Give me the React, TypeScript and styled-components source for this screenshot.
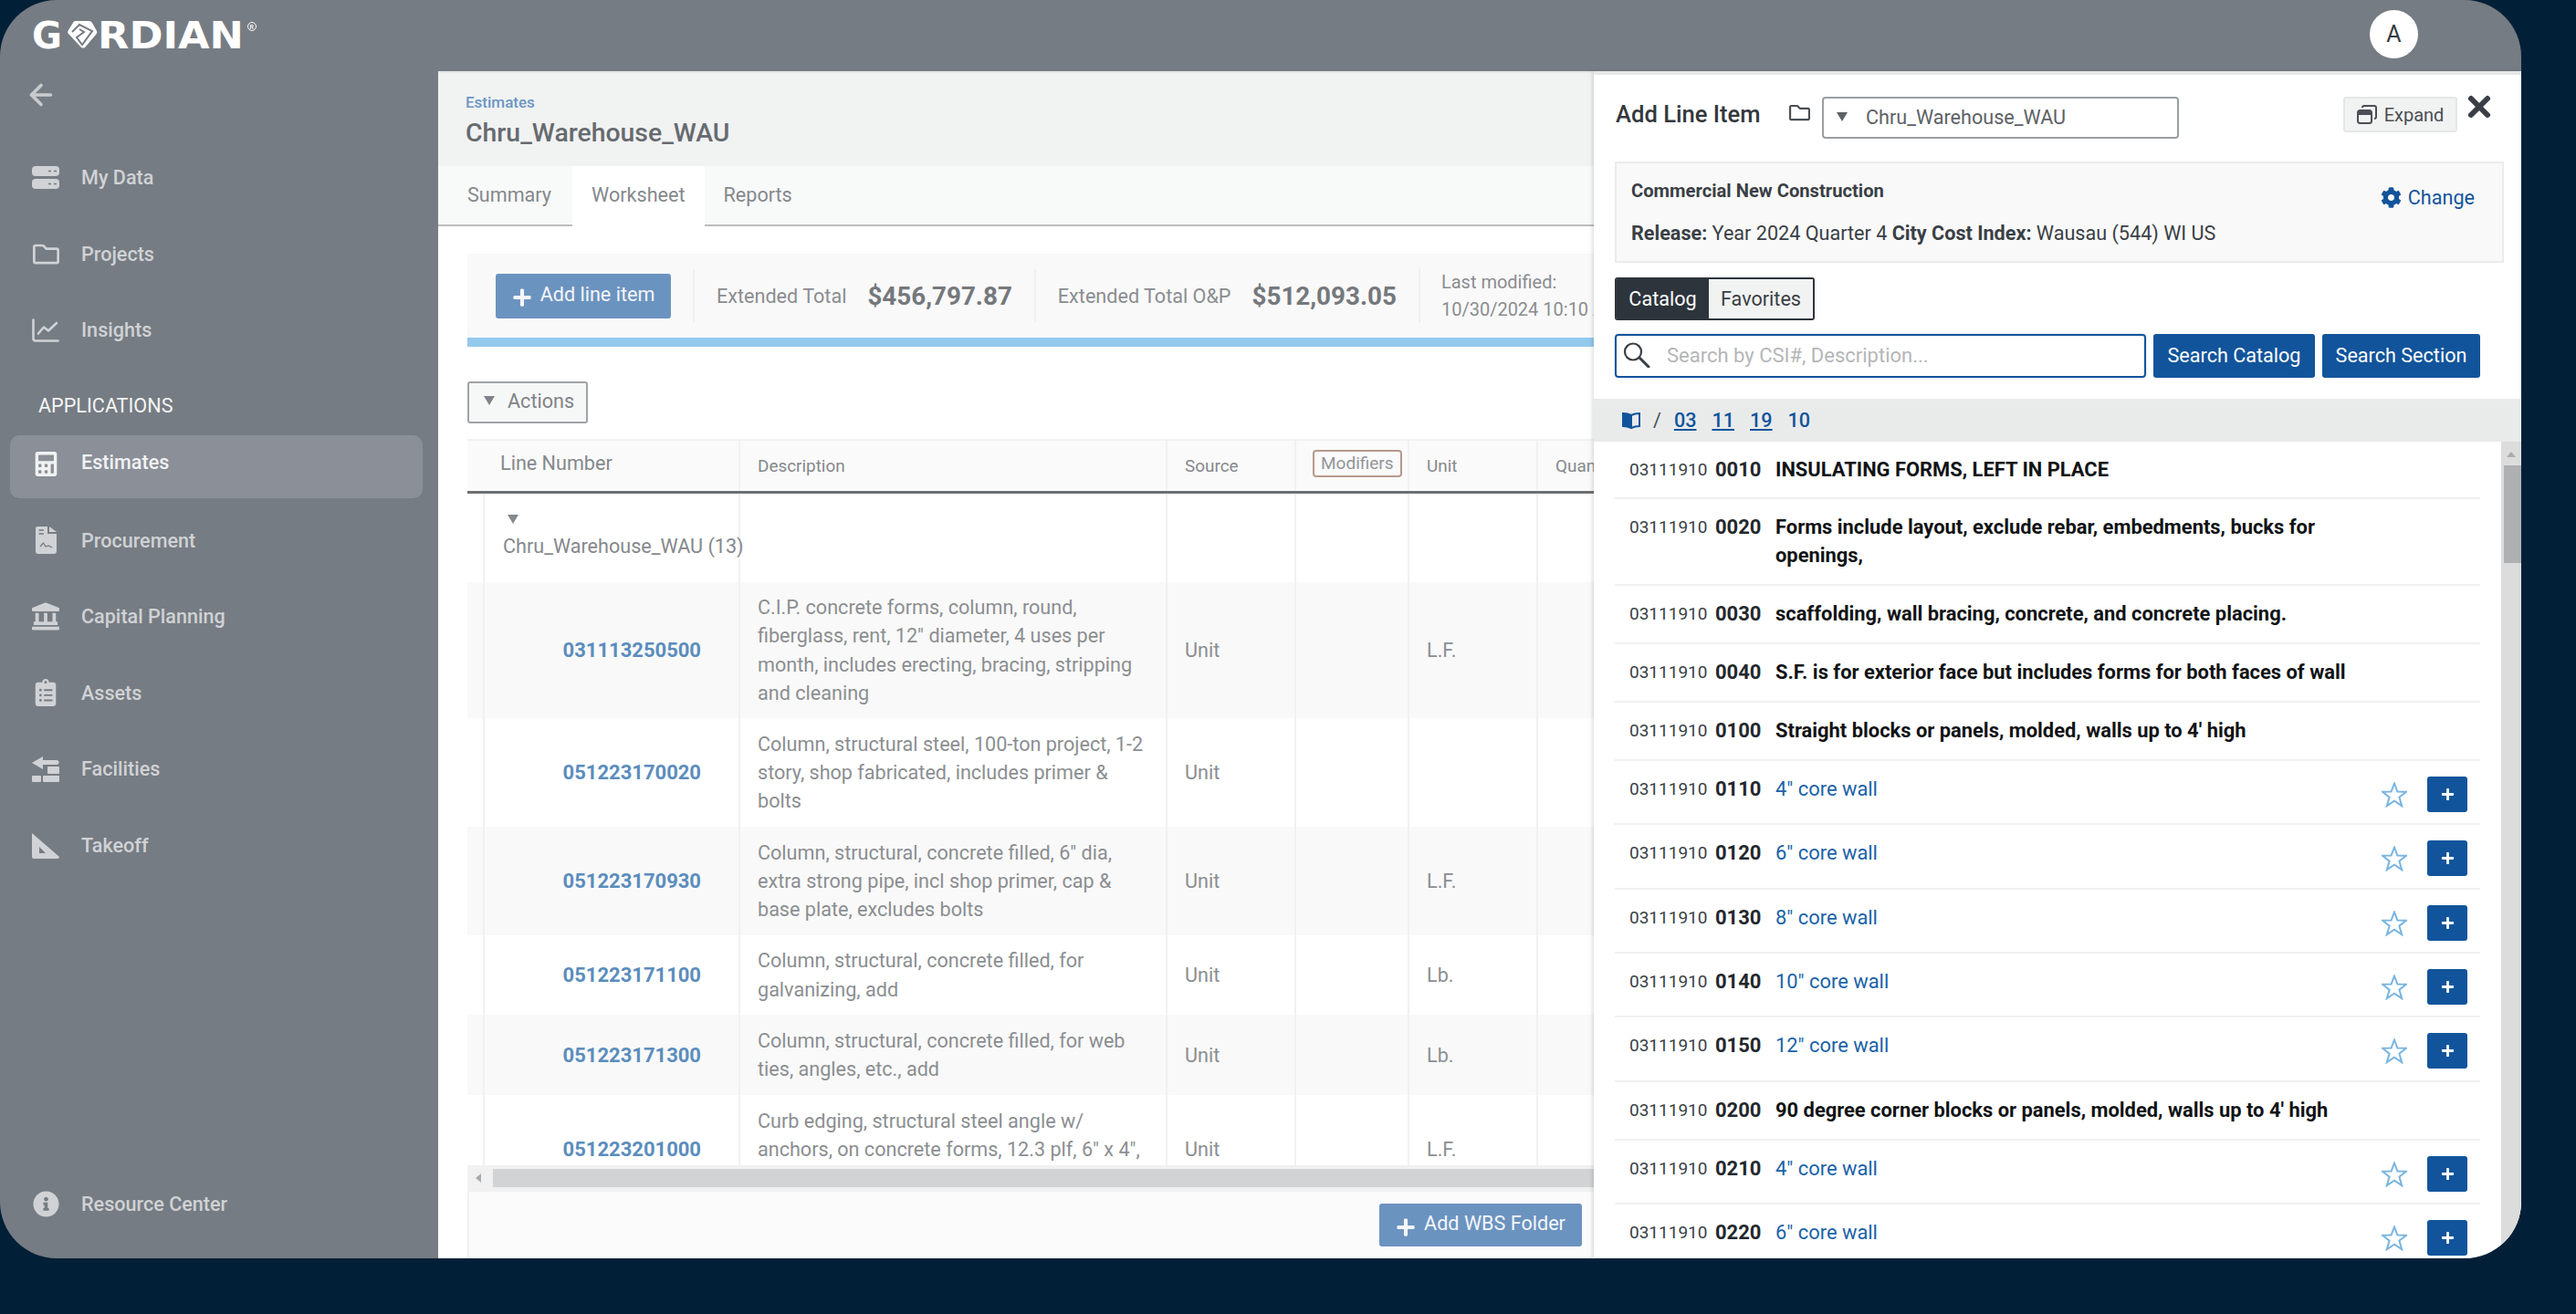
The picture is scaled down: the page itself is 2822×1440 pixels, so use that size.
import React from "react";
import styled, { createGlobalStyle } from "styled-components";
import {
  FaRegFolder,
  FaCalculator,
  FaLandmark,
  FaClipboardList,
  FaInfoCircle,
  FaCog,
  FaPlus,
} from "react-icons/fa";
import { ArrowLeft, X } from "lucide-react";

const GlobalStyle = createGlobalStyle`
  html, body { margin: 0; padding: 0; background: #012037; }
  body { font-family: Roboto, "Liberation Sans", sans-serif; }
  * { box-sizing: border-box; }
`;

const COLS = "299px 468px 141px 124px 141px 200px";

const Page = styled.div`
  width: 2822px;
  height: 1440px;
  background: #012037;
  overflow: hidden;
`;

const Frame = styled.div`
  width: 2762px;
  height: 1379px;
  border-radius: 62px;
  background: #767c83;
  overflow: hidden;
  display: flex;
  flex-direction: column;
`;

const TopBar = styled.header`
  height: 78px;
  flex: none;
  display: flex;
  align-items: flex-start;
  justify-content: space-between;
  padding: 11px 113px 0 35px;
`;

const LogoWrap = styled.div`
  margin-top: 12px;
  display: flex;
  align-items: flex-start;
`;

const Avatar = styled.div`
  width: 53px;
  height: 53px;
  border-radius: 50%;
  background: #ffffff;
  color: #333a41;
  font-size: 25px;
  display: flex;
  align-items: center;
  justify-content: center;
`;

const Body = styled.div`
  flex: 1;
  min-height: 0;
  display: flex;
`;

const Sidebar = styled.nav`
  width: 480px;
  flex: none;
  display: flex;
  flex-direction: column;
  padding: 0 17px 0 11px;
`;

const BackRow = styled.div`
  height: 52px;
  padding-left: 16px;
  color: #c9cbce;
  display: flex;
  align-items: center;
  margin-bottom: 23px;
`;

const NavItem = styled.div<{ $active?: boolean }>`
  height: ${(p) => (p.$active ? "69px" : "83.5px")};
  margin-bottom: ${(p) => (p.$active ? "5px" : "0")};
  display: flex;
  align-items: ${(p) => (p.$active ? "flex-start" : "center")};
  padding-top: ${(p) => (p.$active ? "17px" : "0")};
  padding-left: 24px;
  gap: 24px;
  border-radius: 10px;
  font-size: 21.6px;
  font-weight: 500;
  color: ${(p) => (p.$active ? "#f1f2f3" : "#d0d2d5")};
  background: ${(p) => (p.$active ? "#8a8f98" : "transparent")};
`;

const NavIcon = styled.span`
  width: 30px;
  height: 30px;
  flex: none;
  display: flex;
  align-items: center;
  justify-content: center;
  font-size: 29px;
`;

const NavHeading = styled.div`
  height: 33px;
  padding-left: 31px;
  margin-top: 24px;
  margin-bottom: 16px;
  font-size: 21.6px;
  color: #f4f5f6;
  display: flex;
  align-items: center;
`;

const SideSpacer = styled.div`
  flex: 1;
`;

const BottomItem = styled(NavItem)`
  margin-bottom: 18px;
`;

const Main = styled.main`
  width: 1266px;
  flex: none;
  background: #ffffff;
  border-top: 2px solid #e6e7e8;
  display: flex;
  flex-direction: column;
  overflow: hidden;
`;

const PageHead = styled.div`
  height: 102px;
  flex: none;
  background: #f1f2f2;
  padding: 22px 30px 0;
`;

const Crumb = styled.div`
  font-size: 17px;
  font-weight: 500;
  color: #6b96c4;
  line-height: 20px;
`;

const PageTitle = styled.h1`
  margin: 6px 0 0;
  font-size: 28.4px;
  font-weight: 500;
  line-height: 36px;
  color: #666a6f;
`;

const Tabs = styled.div`
  height: 66px;
  flex: none;
  background: #f8f9f9;
  border-bottom: 2px solid #bcbdbe;
  display: flex;
  padding-left: 32px;
`;

const Tab = styled.div<{ $active?: boolean }>`
  height: 66px;
  padding: 0 21px 3px;
  display: flex;
  align-items: center;
  font-size: 21.6px;
  color: #85888c;
  background: ${(p) => (p.$active ? "#ffffff" : "transparent")};
  &:first-child {
    padding: 0 23px 3px 0;
  }
`;

const Content = styled.div`
  flex: 1;
  min-height: 0;
  padding: 30px 0 0 32px;
  display: flex;
  flex-direction: column;
`;

const Totals = styled.div`
  height: 92px;
  flex: none;
  background: #f9f9f9;
  display: flex;
  align-items: center;
  padding-left: 31px;
  white-space: nowrap;
`;

const PrimaryButton = styled.div`
  display: inline-flex;
  align-items: center;
  justify-content: center;
  gap: 9px;
  background: #6b93bf;
  color: #f4f6f9;
  border-radius: 3px;
  font-size: 21.6px;
  padding-bottom: 4px;
  svg {
    margin-top: 8px;
  }
`;

const AddItemButton = styled(PrimaryButton)`
  width: 192px;
  height: 49px;
  flex: none;
`;

const TotalGroup = styled.div`
  height: 58px;
  border-left: 2px solid #f0f0f0;
  display: flex;
  align-items: center;
  padding: 0 24px;
  gap: 23px;
  margin-left: 24px;
  & + & {
    margin-left: 0;
  }
`;

const TotalLabel = styled.span`
  font-size: 21.6px;
  color: #8a8d90;
`;

const TotalValue = styled.span`
  font-size: 27.8px;
  font-weight: 700;
  color: #75787c;
`;

const Modified = styled.div`
  border-left: 2px solid #f0f0f0;
  padding-left: 23px;
  font-size: 20px;
  line-height: 30px;
  color: #8a8d90;
`;

const ProgressLine = styled.div`
  height: 10px;
  flex: none;
  background: #93c9ec;
`;

const ActionsButton = styled.div`
  width: 132px;
  height: 46px;
  flex: none;
  margin-top: 38px;
  border: 2px solid #a0a3a6;
  border-radius: 3px;
  background: #f6f7f7;
  display: flex;
  align-items: center;
  gap: 14px;
  padding: 0 0 4px 16px;
  font-size: 21.6px;
  color: #808387;
`;

const Caret = styled.span`
  width: 0;
  height: 0;
  flex: none;
  border-left: 6px solid transparent;
  border-right: 6px solid transparent;
  border-top: 10px solid currentColor;
`;

const TableWrap = styled.div`
  margin-top: 17px;
  flex: 1;
  min-height: 0;
  display: flex;
  flex-direction: column;
  overflow: hidden;
`;

const HeadRow = styled.div`
  height: 60px;
  flex: none;
  display: grid;
  grid-template-columns: ${COLS};
  background: #fafafa;
  border-bottom: 3px solid #6d7073;
  border-top: 2px solid #f1f1f1;
`;

const HeadCell = styled.div<{ $large?: boolean }>`
  display: flex;
  align-items: center;
  padding-left: ${(p) => (p.$large ? "36px" : "19px")};
  font-size: ${(p) => (p.$large ? "21.6px" : "18.9px")};
  padding-bottom: ${(p) => (p.$large ? "6px" : "0")};
  color: #85888c;
  border-right: 2px solid #f1f1f1;
  white-space: nowrap;
`;

const ModifierTag = styled.span`
  border: 2px solid #b59a8c;
  border-radius: 4px;
  height: 30px;
  padding: 0 7px;
  margin-left: -1px;
  margin-bottom: 6px;
  display: flex;
  align-items: center;
  font-size: 19px;
  color: #92959a;
`;

const TableBody = styled.div`
  flex: 1;
  min-height: 0;
  overflow: hidden;
`;

const GroupRow = styled.div`
  height: 97px;
  display: grid;
  grid-template-columns: ${COLS};
`;

const GroupCell = styled.div`
  border-right: 2px solid #f1f1f1;
`;

const GroupName = styled.div`
  margin-left: 17px;
  height: 100%;
  border-left: 2px solid #f1f1f1;
  padding: 15px 0 0 20px;
  font-size: 21.6px;
  color: #85888c;
  white-space: nowrap;
  position: relative;
  z-index: 1;
`;

const GroupCaret = styled(Caret)`
  display: block;
  margin: 8px 0 12px 5px;
`;

const DataRow = styled.div<{ $h: number; $odd: boolean }>`
  height: ${(p) => p.$h}px;
  display: grid;
  grid-template-columns: ${COLS};
  background: ${(p) => (p.$odd ? "#f9f9f9" : "#ffffff")};
`;

const Cell = styled.div`
  border-right: 2px solid #f1f1f1;
  padding-left: 19px;
  display: flex;
  align-items: center;
  font-size: 21.6px;
  color: #8b8e91;
`;

const LineNoCell = styled(Cell)`
  padding-left: 0;
  justify-content: flex-end;
  padding-right: 41px;
  font-size: 22px;
  font-weight: 700;
  color: #5b8dbd;
  position: relative;
  &::before {
    content: "";
    position: absolute;
    left: 17px;
    top: 0;
    bottom: 0;
    border-left: 2px solid #f1f1f1;
  }
`;

const DescCell = styled(Cell)`
  line-height: 31.3px;
  padding-right: 14px;
`;

const ClippedRow = styled.div`
  overflow: hidden;
`;

const HScroll = styled.div`
  height: 27px;
  flex: none;
  background: #f1f1f1;
  display: flex;
  align-items: center;
  padding: 0 0 0 28px;
  position: relative;
`;

const HThumb = styled.div`
  flex: 1;
  height: 20px;
  background: #d2d3d4;
`;

const ScrollArrowLeft = styled.span`
  position: absolute;
  left: 9px;
  top: 9px;
  border-top: 5px solid transparent;
  border-bottom: 5px solid transparent;
  border-right: 6px solid #a9abad;
`;

const TableFoot = styled.div`
  height: 75px;
  flex: none;
  background: #fbfbfb;
  border-top: 2px solid #f1f1f1;
  border-left: 2px solid #f1f1f1;
  display: flex;
  justify-content: flex-end;
  padding: 13px 13px 0 0;
  width: 1234px;
`;

const AddWbsButton = styled(PrimaryButton)`
  width: 222px;
  height: 47px;
`;

const Drawer = styled.aside`
  flex: 1;
  min-width: 0;
  background: #ffffff;
  border-top: 4px solid #e6e7e8;
  display: flex;
  flex-direction: column;
  box-shadow: -2px 0 4px rgba(0, 0, 0, 0.12);
  position: relative;
  z-index: 2;
`;

const DrawerHead = styled.div`
  height: 95px;
  flex: none;
  display: flex;
  align-items: flex-start;
  padding: 24px 0 0 24px;
`;

const DrawerTitle = styled.div`
  font-size: 25.6px;
  font-weight: 500;
  color: #33383d;
  line-height: 38px;
  width: 158px;
  flex: none;
  white-space: nowrap;
`;

const FolderIcon = styled.span`
  margin: 6px 13px 0 32px;
  font-size: 23px;
  color: #4a4f55;
  display: flex;
`;

const SelectBox = styled.div`
  width: 391px;
  height: 46px;
  flex: none;
  border: 2px solid #9b9ea1;
  border-radius: 4px;
  display: flex;
  align-items: center;
  gap: 20px;
  padding: 0 0 2px 14px;
  font-size: 21.6px;
  color: #5d6166;
`;

const ExpandButton = styled.div`
  width: 125px;
  height: 39px;
  flex: none;
  margin-left: 180px;
  background: #f1f2f2;
  border: 2px solid #e6e6e6;
  border-radius: 3px;
  display: flex;
  align-items: center;
  justify-content: center;
  gap: 8px;
  font-size: 20px;
  color: #4a4f55;
`;

const CloseIcon = styled.span`
  margin: -7px 0 0 6px;
  display: flex;
  color: #3a3f45;
`;

const InfoBox = styled.div`
  height: 111px;
  flex: none;
  margin: 0 19px 0 23px;
  background: #f9f9f9;
  border: 2px solid #ececec;
  display: flex;
  justify-content: space-between;
  padding: 15px 30px 0 16px;
  color: #3a3f45;
`;

const InfoLines = styled.div`
  display: flex;
  flex-direction: column;
  gap: 17px;
`;

const InfoTitle = styled.div`
  font-size: 20.2px;
  font-weight: 700;
  line-height: 30px;
  color: #3a3f45;
`;

const InfoLine = styled.div`
  font-size: 21.6px;
  line-height: 30px;
  b {
    font-weight: 700;
  }
`;

const ChangeLink = styled.div`
  display: flex;
  align-items: center;
  gap: 7px;
  height: 44px;
  font-size: 21.6px;
  color: #12549b;
  svg {
    font-size: 23px;
  }
`;

const ToggleGroup = styled.div`
  display: flex;
  width: 219px;
  height: 47px;
  flex: none;
  margin: 16px 0 0 23px;
  border: 2px solid #2d343c;
  border-radius: 3px;
  overflow: hidden;
`;

const Toggle = styled.div<{ $on?: boolean }>`
  flex: ${(p) => (p.$on ? "0 0 101px" : "1")};
  display: flex;
  align-items: center;
  justify-content: center;
  font-size: 21.6px;
  background: ${(p) => (p.$on ? "#2d343c" : "#f1f2f2")};
  color: ${(p) => (p.$on ? "#ffffff" : "#3a3f45")};
`;

const SearchRow = styled.div`
  display: flex;
  gap: 8px;
  margin: 15px 0 0 23px;
  height: 48px;
  flex: none;
`;

const SearchBox = styled.div`
  width: 582px;
  border: 2px solid #12549b;
  border-radius: 4px;
  box-shadow: 0 0 3px #b9d3ec;
  display: flex;
  align-items: center;
  gap: 18px;
  padding: 0 0 2px 7px;
  font-size: 22px;
  color: #b4b6b8;
`;

const SearchButton = styled.div<{ $w: number }>`
  width: ${(p) => p.$w}px;
  background: #12549b;
  color: #ffffff;
  border-radius: 3px;
  font-size: 21.6px;
  padding-bottom: 2px;
  display: flex;
  align-items: center;
  justify-content: center;
`;

const Breadcrumb = styled.div`
  height: 47px;
  flex: none;
  margin-top: 23px;
  background: #e9ebeb;
  display: flex;
  align-items: center;
  padding-left: 31px;
  font-size: 21.6px;
  color: #12549b;
`;

const BreadSlash = styled.span`
  margin: 0 14px;
  color: #4a4f55;
`;

const BreadLink = styled.span<{ $current?: boolean }>`
  font-weight: 500;
  margin-right: 17px;
  text-decoration: ${(p) => (p.$current ? "none" : "underline")};
`;

const ListArea = styled.div`
  flex: 1;
  min-height: 0;
  display: flex;
  overflow: hidden;
`;

const List = styled.div`
  flex: 1;
  min-width: 0;
  padding: 0 23px;
`;

const ListRow = styled.div<{ $h: number }>`
  height: ${(p) => p.$h}px;
  border-bottom: 2px solid #f0f0f0;
  display: flex;
  align-items: flex-start;
  padding: 15px 0 0 16px;
  position: relative;
  flex: none;
  &:last-child {
    border-bottom: none;
  }
`;

const Code = styled.span`
  width: 94px;
  flex: none;
  font-size: 19px;
  line-height: 31px;
  color: #3a3f45;
`;

const Suffix = styled.span`
  width: 66px;
  flex: none;
  font-size: 22px;
  line-height: 31px;
  font-weight: 700;
  color: #23282d;
`;

const Desc = styled.span<{ $link?: boolean }>`
  width: 650px;
  flex: none;
  font-size: 21.9px;
  line-height: 31px;
  font-weight: ${(p) => (p.$link ? 400 : 700)};
  color: ${(p) => (p.$link ? "#1a62a8" : "#111315")};
`;

const RowActions = styled.div`
  position: absolute;
  right: 14px;
  top: 17px;
  display: flex;
  align-items: center;
  gap: 22px;
`;

const AddSmall = styled.div`
  width: 44px;
  height: 39px;
  background: #12549b;
  border-radius: 3px;
  color: #ffffff;
  display: flex;
  align-items: center;
  justify-content: center;
  font-size: 15px;
`;

const ScrollTrack = styled.div`
  width: 22px;
  flex: none;
  background: #dcdcdc;
  position: relative;
`;

const ScrollArrowUp = styled.span`
  position: absolute;
  left: 6px;
  top: 11px;
  border-left: 5px solid transparent;
  border-right: 5px solid transparent;
  border-bottom: 6px solid #a9abad;
`;

const ScrollThumb = styled.div`
  position: absolute;
  left: 3px;
  right: 0;
  top: 26px;
  height: 107px;
  background: #aeb0b1;
`;

const MyDataIcon = () => (
  <svg width="30" height="25" viewBox="0 0 30 25" fill="currentColor">
    <rect x="0" y="0" width="30" height="11" rx="4" />
    <rect x="0" y="14" width="30" height="11" rx="4" />
    <path d="M18 5.5 H21 M24 5.5 H27 M18 19.5 H21 M24 19.5 H27" stroke="#767c83" strokeWidth="1.4" />
  </svg>
);

const InsightsIcon = () => (
  <svg width="30" height="26" viewBox="0 0 30 26" fill="none" stroke="currentColor" strokeWidth="2.6" strokeLinecap="round" strokeLinejoin="round">
    <path d="M1.5 1.5 V22 Q1.5 24.5 4 24.5 H28.5" />
    <path d="M7 16.5 L13 9.5 L18 13.5 L27 5" />
  </svg>
);

const ProcurementIcon = () => (
  <svg width="23" height="30" viewBox="0 0 23 30" fill="currentColor">
    <path d="M2 0 H13 V8 H23 V27 Q23 30 20 30 H3 Q0 30 0 27 V2 Q0 0 2 0 Z" />
    <path d="M15 0 L23 6 H15 Z" />
    <path d="M3.5 4 H9 M3.5 8 H9 M5 22 L8.5 18 L11 22 L14 21 L18 23" fill="none" stroke="#767c83" strokeWidth="1.3" />
  </svg>
);

const FacilitiesIcon = () => (
  <svg width="30" height="28" viewBox="0 0 30 28" fill="currentColor">
    <path d="M0 7 L12 0 V4 H27 Q29.5 4 29.5 6.5 Q29.5 9 27 9 H12 V14 Z" />
    <rect x="17" y="11" width="13" height="8" rx="1" />
    <rect x="0" y="21" width="10" height="7" rx="1" />
    <rect x="12" y="21" width="18" height="7" rx="1" />
  </svg>
);

const TakeoffIcon = () => (
  <svg width="30" height="29" viewBox="0 0 30 29" fill="currentColor">
    <path fillRule="evenodd" d="M0 1 L30 27 Q30 29 28 29 H2 Q0 29 0 27 Z M8 16 V23 H15 Z" />
  </svg>
);

const LogoMark = () => (
  <svg width="248" height="30" viewBox="0 0 248 30" fill="#ffffff" overflow="visible">
    <text x="0" y="30" fontFamily="DejaVu Sans, sans-serif" fontWeight="700" fontSize="41" textLength="33" lengthAdjust="spacingAndGlyphs">G</text>
    <path d="M47 0 H62 Q65 0 66 2 L71 11 Q72 13 70 15 L58 29 Q56 30 54 29 L41 15 Q38 13 40 10 L45 2 Q46 0 47 0 Z" />
    <path d="M44 12 L52 4 L66 11 L55 26 L49 18 L57 12 L52 9" fill="none" stroke="#767c83" strokeWidth="2" />
    <text x="72" y="30" fontFamily="DejaVu Sans, sans-serif" fontWeight="700" fontSize="41" textLength="160" lengthAdjust="spacingAndGlyphs">RDIAN</text>
    <circle cx="241" cy="6" r="4.5" fill="none" stroke="#ffffff" strokeWidth="1" />
    <text x="238.6" y="8.6" fontFamily="Roboto, sans-serif" fontSize="7" fontWeight="500">R</text>
  </svg>
);

const ExpandIcon = () => (
  <svg width="22" height="21" viewBox="0 0 22 21" fill="none" stroke="currentColor" strokeWidth="2">
    <path d="M6 3 Q6 1 8 1 H19 Q21 1 21 3 V13 Q21 15 19 15" />
    <rect x="1" y="6" width="15" height="14" rx="2.5" />
    <path d="M1 9 H16" strokeWidth="4" />
  </svg>
);

const SearchIcon = () => (
  <svg width="30" height="28" viewBox="0 0 30 28" fill="none" stroke="#3a3f45" strokeWidth="2.2" strokeLinecap="round">
    <circle cx="11" cy="10.5" r="9" />
    <path d="M18 17 L28 27" strokeWidth="3" />
  </svg>
);

const BookIcon = () => (
  <svg width="20" height="18" viewBox="0 0 20 18" fill="none" stroke="#12549b" strokeWidth="2">
    <path d="M10 3 Q6 1 1 1 V15 Q6 15 10 17 Z" fill="#12549b" />
    <path d="M10 3 Q14 1 19 1 V15 Q14 15 10 17" />
  </svg>
);

const StarIcon = () => (
  <svg width="28" height="28" viewBox="0 0 28 28" fill="none" stroke="#7ab5e0" strokeWidth="2" strokeLinejoin="miter">
    <polygon points="14,1.5 17.4,10.6 27,10.8 19.4,16.6 22.2,26.2 14,20.6 5.8,26.2 8.6,16.6 1,10.8 10.6,10.6" />
  </svg>
);

const navTop = [
  { label: "My Data", icon: <MyDataIcon /> },
  { label: "Projects", icon: <FaRegFolder /> },
  { label: "Insights", icon: <InsightsIcon /> },
];

const navApps = [
  { label: "Estimates", icon: <FaCalculator size={27} />, active: true },
  { label: "Procurement", icon: <ProcurementIcon /> },
  { label: "Capital Planning", icon: <FaLandmark size={33} /> },
  { label: "Assets", icon: <FaClipboardList size={30} /> },
  { label: "Facilities", icon: <FacilitiesIcon /> },
  { label: "Takeoff", icon: <TakeoffIcon /> },
];

const rows = [
  { no: "031113250500", h: 149, desc: 'C.I.P. concrete forms, column, round, fiberglass, rent, 12" diameter, 4 uses per month, includes erecting, bracing, stripping and cleaning', unit: "L.F." },
  { no: "051223170020", h: 119, desc: "Column, structural steel, 100-ton project, 1-2 story, shop fabricated, includes primer & bolts", unit: "" },
  { no: "051223170930", h: 119, desc: 'Column, structural, concrete filled, 6" dia, extra strong pipe, incl shop primer, cap & base plate, excludes bolts', unit: "L.F." },
  { no: "051223171100", h: 87, desc: "Column, structural, concrete filled, for galvanizing, add", unit: "Lb." },
  { no: "051223171300", h: 88, desc: "Column, structural, concrete filled, for web ties, angles, etc., add", unit: "Lb." },
  { no: "051223201000", h: 119, desc: 'Curb edging, structural steel angle w/ anchors, on concrete forms, 12.3 plf, 6" x 4", 1/2" thick', unit: "L.F." },
];

const items = [
  { s: "0010", d: "INSULATING FORMS, LEFT IN PLACE", h: 63 },
  { s: "0020", d: "Forms include layout, exclude rebar, embedments, bucks for openings,", h: 95 },
  { s: "0030", d: "scaffolding, wall bracing, concrete, and concrete placing.", h: 64 },
  { s: "0040", d: "S.F. is for exterior face but includes forms for both faces of wall", h: 64 },
  { s: "0100", d: "Straight blocks or panels, molded, walls up to 4' high", h: 64 },
  { s: "0110", d: '4" core wall', h: 70, link: true },
  { s: "0120", d: '6" core wall', h: 71, link: true },
  { s: "0130", d: '8" core wall', h: 70, link: true },
  { s: "0140", d: '10" core wall', h: 70, link: true },
  { s: "0150", d: '12" core wall', h: 71, link: true },
  { s: "0200", d: "90 degree corner blocks or panels, molded, walls up to 4' high", h: 64 },
  { s: "0210", d: '4" core wall', h: 70, link: true },
  { s: "0220", d: '6" core wall', h: 59, link: true },
];

export default function App() {
  return (
    <Page>
      <GlobalStyle />
      <Frame>
        <TopBar>
          <LogoWrap>
            <LogoMark />
          </LogoWrap>
          <Avatar>A</Avatar>
        </TopBar>
        <Body>
          <Sidebar>
            <BackRow>
              <ArrowLeft size={36} strokeWidth={2.4} />
            </BackRow>
            {navTop.map((n) => (
              <NavItem key={n.label}>
                <NavIcon>{n.icon}</NavIcon>
                {n.label}
              </NavItem>
            ))}
            <NavHeading>APPLICATIONS</NavHeading>
            {navApps.map((n) => (
              <NavItem key={n.label} $active={n.active}>
                <NavIcon>{n.icon}</NavIcon>
                {n.label}
              </NavItem>
            ))}
            <SideSpacer />
            <BottomItem>
              <NavIcon><FaInfoCircle /></NavIcon>
              Resource Center
            </BottomItem>
          </Sidebar>

          <Main>
            <PageHead>
              <Crumb>Estimates</Crumb>
              <PageTitle>Chru_Warehouse_WAU</PageTitle>
            </PageHead>
            <Tabs>
              <Tab>Summary</Tab>
              <Tab $active>Worksheet</Tab>
              <Tab>Reports</Tab>
            </Tabs>
            <Content>
              <Totals>
                <AddItemButton><FaPlus size={22} /> Add line item</AddItemButton>
                <TotalGroup>
                  <TotalLabel>Extended Total</TotalLabel>
                  <TotalValue>$456,797.87</TotalValue>
                </TotalGroup>
                <TotalGroup>
                  <TotalLabel>Extended Total O&amp;P</TotalLabel>
                  <TotalValue>$512,093.05</TotalValue>
                </TotalGroup>
                <Modified>
                  <div>Last modified:</div>
                  <div>10/30/2024 10:10 AM</div>
                </Modified>
              </Totals>
              <ProgressLine />
              <ActionsButton><Caret /> Actions</ActionsButton>
              <TableWrap>
                <HeadRow>
                  <HeadCell $large>Line Number</HeadCell>
                  <HeadCell>Description</HeadCell>
                  <HeadCell>Source</HeadCell>
                  <HeadCell><ModifierTag>Modifiers</ModifierTag></HeadCell>
                  <HeadCell>Unit</HeadCell>
                  <HeadCell>Quantity</HeadCell>
                </HeadRow>
                <TableBody>
                  <GroupRow>
                    <GroupCell>
                      <GroupName>
                        <GroupCaret />
                        Chru_Warehouse_WAU (13)
                      </GroupName>
                    </GroupCell>
                    <GroupCell />
                    <GroupCell />
                    <GroupCell />
                    <GroupCell />
                    <GroupCell />
                  </GroupRow>
                  {rows.map((r, i) => (
                    <DataRow key={r.no} $h={r.h} $odd={i % 2 === 0}>
                      <LineNoCell>{r.no}</LineNoCell>
                      <DescCell>
                        <ClippedRow>{r.desc}</ClippedRow>
                      </DescCell>
                      <Cell>Unit</Cell>
                      <Cell />
                      <Cell>{r.unit}</Cell>
                      <Cell />
                    </DataRow>
                  ))}
                </TableBody>
                <HScroll>
                  <ScrollArrowLeft />
                  <HThumb />
                </HScroll>
                <TableFoot>
                  <AddWbsButton><FaPlus size={22} /> Add WBS Folder</AddWbsButton>
                </TableFoot>
              </TableWrap>
            </Content>
          </Main>

          <Drawer>
            <DrawerHead>
              <DrawerTitle>Add Line Item</DrawerTitle>
              <FolderIcon><FaRegFolder /></FolderIcon>
              <SelectBox><Caret /> Chru_Warehouse_WAU</SelectBox>
              <ExpandButton><ExpandIcon /> Expand</ExpandButton>
              <CloseIcon><X size={36} strokeWidth={4} /></CloseIcon>
            </DrawerHead>
            <InfoBox>
              <InfoLines>
                <InfoTitle>Commercial New Construction</InfoTitle>
                <InfoLine><b>Release:</b> Year 2024 Quarter 4 <b>City Cost Index:</b> Wausau (544) WI US</InfoLine>
              </InfoLines>
              <ChangeLink><FaCog /> Change</ChangeLink>
            </InfoBox>
            <ToggleGroup>
              <Toggle $on>Catalog</Toggle>
              <Toggle>Favorites</Toggle>
            </ToggleGroup>
            <SearchRow>
              <SearchBox>
                <SearchIcon />
                Search by CSI#, Description...
              </SearchBox>
              <SearchButton $w={177}>Search Catalog</SearchButton>
              <SearchButton $w={173}>Search Section</SearchButton>
            </SearchRow>
            <Breadcrumb>
              <BookIcon />
              <BreadSlash>/</BreadSlash>
              <BreadLink>03</BreadLink>
              <BreadLink>11</BreadLink>
              <BreadLink>19</BreadLink>
              <BreadLink $current>10</BreadLink>
            </Breadcrumb>
            <ListArea>
              <List>
                {items.map((it) => (
                  <ListRow key={it.s} $h={it.h}>
                    <Code>03111910</Code>
                    <Suffix>{it.s}</Suffix>
                    <Desc $link={it.link}>{it.d}</Desc>
                    {it.link && (
                      <RowActions>
                        <StarIcon />
                        <AddSmall><FaPlus /></AddSmall>
                      </RowActions>
                    )}
                  </ListRow>
                ))}
              </List>
              <ScrollTrack>
                <ScrollArrowUp />
                <ScrollThumb />
              </ScrollTrack>
            </ListArea>
          </Drawer>
        </Body>
      </Frame>
    </Page>
  );
}
